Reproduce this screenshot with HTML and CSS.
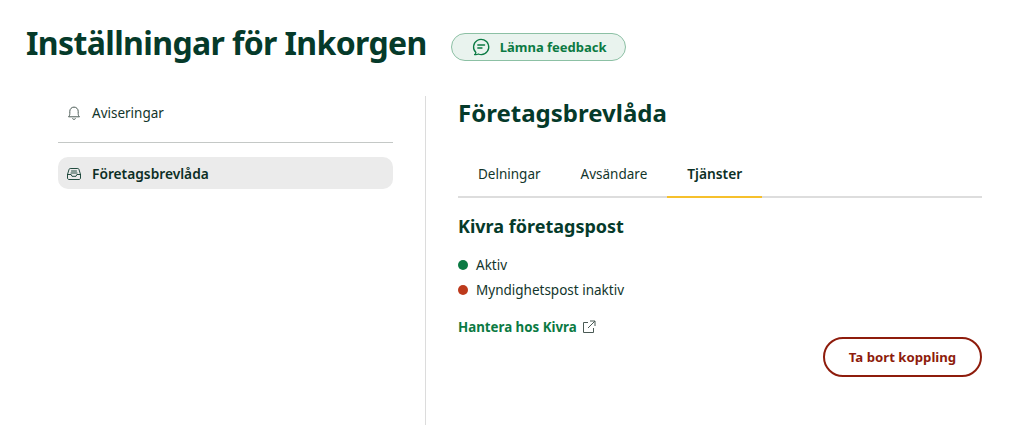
FILE: index.html
```html
<!doctype html>
<html lang="sv">
  <head>
    <meta charset="utf-8">
    <title>Inställningar för Inkorgen</title>
    <link rel="stylesheet" href="styles.css">
  </head>
  <body>
    <header class="topbar">
      <h1 class="page-title">Inställningar för Inkorgen</h1>
      <button class="feedback">
        <svg class="feedback-icon" viewBox="0 0 20 20" fill="none" stroke="currentColor" stroke-width="1.3">
          <path d="M3.6 17.6c.9-.5 1.3-1.2 1.3-2.1A7.6 7.6 0 1 1 10.4 17.600c-1.100 0-2.100-.2-3-.6-1.100.6-2.400.9-3.800.6z" stroke-linejoin="round"/>
          <path d="M6.800 8h6.800M6.800 11h4.200" stroke-linecap="round"/>
        </svg>
        Lämna feedback
      </button>
    </header>
    <div class="columns">
      <nav class="sidebar">
        <a class="nav-item">
          <svg class="nav-icon" viewBox="0 0 16 16" fill="none" stroke="#4a5a55" stroke-width="1">
            <path d="M2.500 11.800c1-.9 1.300-1.800 1.300-3.300V6.300a4.200 4.200 0 0 1 8.400 0v2.200c0 1.500.3 2.400 1.300 3.300z" stroke-linejoin="round"/>
            <path d="M6.600 13.800c.6.800 2.200.8 2.800 0" stroke-linecap="round"/>
          </svg>
          Aviseringar
        </a>
        <hr class="nav-rule">
        <a class="nav-item nav-item-active">
          <svg class="nav-icon" viewBox="0 0 16 16" fill="none" stroke="#0c3a2c" stroke-width="0.9">
            <path d="M1.500 8.500 3 3.500c.2-.6.600-1 1.200-1h7.600c.6 0 1 .4 1.200 1l1.500 5v3.500c0 .8-.6 1.500-1.500 1.500H3c-.9 0-1.500-.7-1.500-1.500z" stroke-linejoin="round"/>
            <path d="M1.500 8.500h3.600l.9 1.800h4l.9-1.800h3.600M5.500 5h5M5 7h6" stroke-linecap="round"/>
          </svg>
          Företagsbrevlåda
        </a>
      </nav>
      <main class="content">
        <h2 class="section-title">Företagsbrevlåda</h2>
        <div class="tabs">
          <a class="tab">Delningar</a>
          <a class="tab">Avsändare</a>
          <a class="tab tab-active">Tjänster</a>
        </div>
        <h3 class="service-title">Kivra företagspost</h3>
        <ul class="status-list">
          <li class="status"><span class="dot dot-green"></span>Aktiv</li>
          <li class="status"><span class="dot dot-red"></span>Myndighetspost inaktiv</li>
        </ul>
        <a class="manage-link">
          Hantera hos Kivra
          <svg class="link-icon" viewBox="0 0 14 14" fill="none" stroke="#4a5a55" stroke-width="1">
            <path d="M6 2.500H1.500v10h10V8M8 1h5v5M13 1 6 8"/>
          </svg>
        </a>
        <div class="actions">
          <button class="danger">Ta bort koppling</button>
        </div>
      </main>
    </div>
  </body>
</html>
```

FILE: styles.css
```css
html,
body {
  margin: 0;
  padding: 0;
  height: 100%;
  overflow: hidden;
  background: #fff;
}
body {
  font-family: "Noto Sans", sans-serif;
  font-size: 13.5px;
  color: #12352b;
}
.topbar {
  display: flex;
  align-items: center;
  gap: 24px;
  padding: 21px 0 0 26px;
  height: 44px;
}
.page-title {
  margin: 0;
  font-size: 32px;
  line-height: 44px;
  font-weight: 700;
  letter-spacing: -0.62px;
  color: #053a2a;
  white-space: nowrap;
}
.feedback {
  display: flex;
  align-items: center;
  gap: 9px;
  height: 28px;
  width: 175px;
  margin-top: 7px;
  padding: 0 0 0 19px;
  border: 1px solid #8cc0a4;
  border-radius: 14px;
  background: #e9f3ee;
  color: #0b7a43;
  font: 700 13px "Noto Sans", sans-serif;
  box-sizing: border-box;
}
.feedback-icon {
  width: 20px;
  height: 20px;
}
.columns {
  display: flex;
  margin-top: 31px;
  height: 329px;
}
.sidebar {
  width: 335px;
  margin-left: 58px;
  padding-right: 32px;
}
.nav-item {
  display: flex;
  align-items: center;
  gap: 10px;
  height: 32px;
  padding: 1px 0 0 8px;
  box-sizing: border-box;
  border-radius: 10px;
}
.nav-icon {
  width: 16px;
  height: 16px;
}
.nav-rule {
  margin: 14px 0;
  border: 0;
  border-top: 1px solid #c4c8c6;
}
.nav-item-active {
  background: #ebebeb;
  font-size: 13.75px;
  font-weight: 600;
  color: #0c2f25;
}
.content {
  width: 524px;
  border-left: 1px solid #dcdcdc;
  padding-left: 32px;
}
.section-title {
  margin: 0;
  font-size: 24px;
  line-height: 34px;
  font-weight: 700;
  color: #053a2a;
}
.tabs {
  display: flex;
  margin-top: 24px;
  height: 42px;
  border-bottom: 2px solid #dddddd;
}
.tab {
  padding: 0 20px;
  height: 42px;
  line-height: 40px;
}
.tab-active {
  border-bottom: 2px solid #f6c02c;
  font-size: 13.75px;
  font-weight: 600;
  color: #0c2f25;
}
.service-title {
  margin: 15px 0 0;
  font-size: 18px;
  line-height: 26px;
  font-weight: 700;
  color: #053a2a;
}
.status-list {
  margin: 13px 0 0;
  padding: 0;
  list-style: none;
}
.status {
  display: flex;
  align-items: center;
  gap: 8px;
  height: 25px;
}
.dot {
  width: 10px;
  height: 10px;
  border-radius: 50%;
}
.dot-green {
  background: #0b7a43;
}
.dot-red {
  background: #bd3a1c;
}
.manage-link {
  display: flex;
  align-items: center;
  gap: 5px;
  margin-top: 15px;
  font-weight: 700;
  font-size: 13.3px;
  line-height: 20px;
  color: #0b7a43;
}
.link-icon {
  width: 14px;
  height: 14px;
}
.actions {
  display: flex;
  justify-content: flex-end;
}
.danger {
  width: 159px;
  height: 40px;
  border: 2px solid #8e1c0c;
  border-radius: 20px;
  background: #fff;
  color: #8e1c0c;
  font: 700 13.2px "Noto Sans", sans-serif;
}
```
